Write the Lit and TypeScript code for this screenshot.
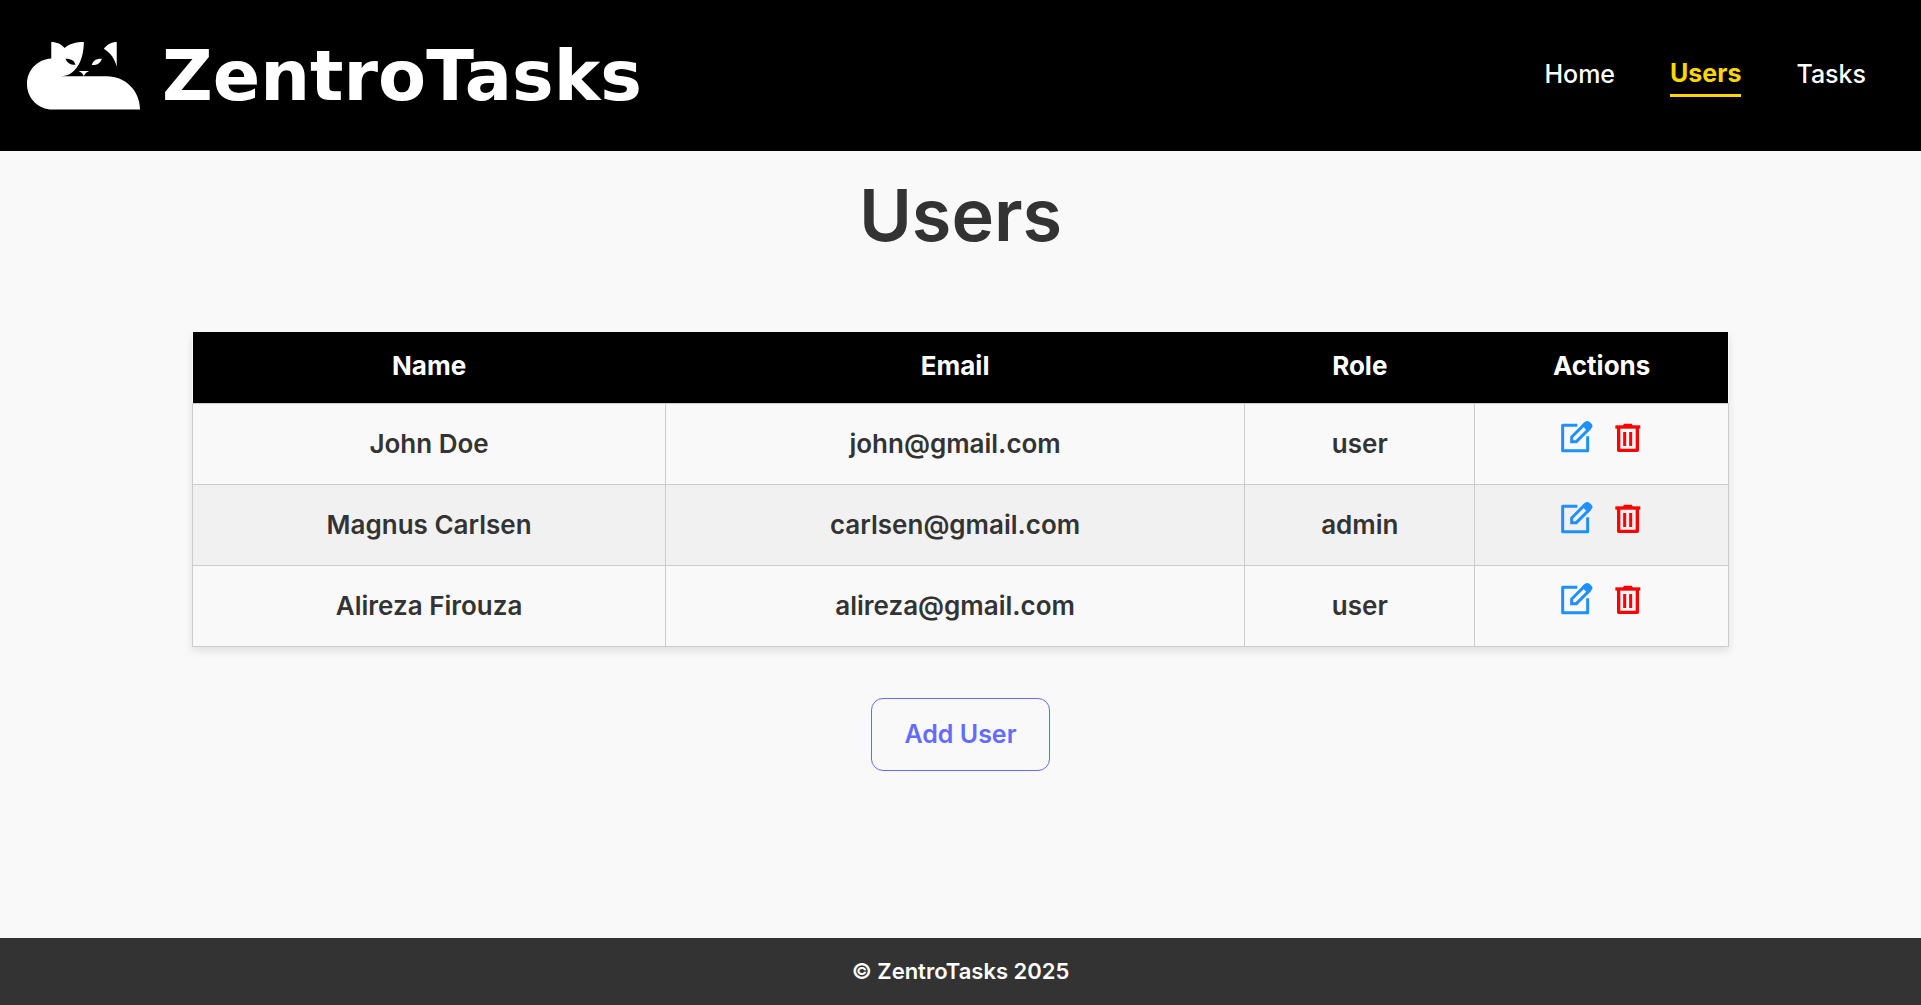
import { LitElement, html, css, svg } from "lit";
import { customElement } from "lit/decorators.js";

interface User {
  name: string;
  email: string;
  role: string;
}

const USERS: User[] = [
  { name: "John Doe", email: "john@gmail.com", role: "user" },
  { name: "Magnus Carlsen", email: "carlsen@gmail.com", role: "admin" },
  { name: "Alireza Firouza", email: "alireza@gmail.com", role: "user" },
];

const catLogo = html`
  <svg class="cat" viewBox="50 66 340 204" aria-hidden="true">
    ${svg`
    <path fill="#fff" fill-rule="evenodd" d="M123 66C140 66 154 73 163 84C177 72 197 66 221 66C221 122 196 169 152 169H290C346 169 390 213 390 269H127C84 269 50 235 50 192C50 150 82 117 123 115Z
      M166 116C171 130 182 135 196 134C192 120 181 116 166 116Z"/>
    <path fill="#fff" d="M245 135C248 121 260 115 275 116C272 129 260 136 245 135Z"/>
    <path fill="#fff" d="M205 153H237C229 156 224 161 221 169C218 161 213 156 205 153Z"/>
    <path fill="#fff" d="M281 86C291 74 304 66 320 66V140C314 116 302 99 281 86Z"/>`}
  </svg>
`;

const editIcon = html`
  <svg class="edit-icon" viewBox="30 30 99 99" aria-hidden="true">
    ${svg`
    <g fill="none" stroke="#1e90ff" stroke-linejoin="round">
      <path stroke-width="9" d="M82 46H38V122H113V79"/>
      <path stroke-width="9" stroke-linejoin="miter" d="M65 95V81L103 43L117 57L79 95Z"/>
    </g>
    <path fill="#1e90ff" d="M95 45L105 35Q112 30 119 36L125 42Q130 48 125 54L114 65Z"/>`}
  </svg>
`;

const trashIcon = html`
  <svg class="trash-icon" viewBox="189 30 90 99" aria-hidden="true">
    ${svg`
    <g fill="none" stroke="#f00">
      <path stroke-width="10" d="M196 51H271"/>
      <path stroke-width="10" stroke-linejoin="round" d="M206 54V121H262V54"/>
      <path stroke-width="9" d="M224 66V108M242 66V108"/>
    </g>
    <path fill="#f00" d="M218 48L222 41H245L249 48Z"/>`}
  </svg>
`;

@customElement("app-root")
export class AppRoot extends LitElement {
  static styles = css`
    :host {
      display: flex;
      flex-direction: column;
      min-height: 100vh;
      background: #f9f9f9;
      color: #333;
      font-family: Inter, "Open Sans", sans-serif;
      font-size: 26px;
      font-weight: 600;
      line-height: 40px;
    }
    .header {
      display: flex;
      align-items: center;
      justify-content: space-between;
      padding: 26px 55px 27px 27px;
      background: #000;
    }
    .brand {
      display: flex;
      align-items: center;
      gap: 22px;
      padding-top: 2px;
      color: #fff;
      font-family: "DejaVu Sans", sans-serif;
      font-size: 70px;
      font-weight: 700;
      line-height: 96px;
      text-decoration: none;
    }
    .cat {
      width: 113px;
      height: 68px;
    }
    .nav {
      display: flex;
      align-items: center;
      gap: 55px;
    }
    .nav-link {
      padding-bottom: 2px;
      color: #fff;
      font-size: 25px;
      font-weight: 500;
      line-height: 38px;
      text-decoration: none;
    }
    .nav-link.active {
      color: #ffd700;
      font-weight: 700;
      border-bottom: 3px solid #ffd700;
    }
    .main {
      flex: 1;
      display: flex;
      flex-direction: column;
      align-items: center;
    }
    .title {
      margin: 15px 0 69px;
      font-size: 72px;
      font-weight: 600;
      line-height: 97px;
    }
    .users {
      width: 80%;
      table-layout: fixed;
      border-collapse: collapse;
      text-align: center;
      box-shadow: 0 4px 8px rgba(0, 0, 0, 0.1);
    }
    .col-name {
      width: 30.8%;
    }
    .col-email {
      width: 37.7%;
    }
    .col-role {
      width: 15%;
    }
    .users th {
      padding: 14px 15px 17px;
      background: #000;
      color: #fff;
      font-weight: 700;
    }
    .users td {
      padding: 16px 15px 24px;
      border: 1px solid #ccc;
    }
    .users td.text {
      padding: 20px 15px;
    }
    .users tbody tr:nth-child(even) {
      background: #f1f1f1;
    }
    .actions {
      display: flex;
      justify-content: center;
      align-items: flex-start;
      gap: 20px;
      height: 40px;
    }
    .icon-button {
      display: flex;
      padding: 0;
      border: 0;
      background: none;
      cursor: pointer;
    }
    .edit-icon {
      width: 33px;
      height: 33px;
    }
    .trash-icon {
      width: 30px;
      height: 33px;
    }
    .add {
      margin: 51px 0;
      padding: 15px 32px 16px;
      border: 1px solid #646cff;
      border-radius: 12px;
      background: none;
      color: #646cff;
      font: inherit;
      font-size: 25px;
      cursor: pointer;
    }
    .footer {
      padding: 13px 20px 14px;
      background: #333;
      color: #fff;
      font-size: 22px;
      text-align: center;
    }
  `;

  private renderRow(user: User) {
    return html`
      <tr>
        <td class="text">${user.name}</td>
        <td class="text">${user.email}</td>
        <td class="text">${user.role}</td>
        <td>
          <div class="actions">
            <button class="icon-button" aria-label="Edit ${user.name}">${editIcon}</button>
            <button class="icon-button" aria-label="Delete ${user.name}">${trashIcon}</button>
          </div>
        </td>
      </tr>
    `;
  }

  render() {
    return html`
      <header class="header">
        <a class="brand" href="#home">${catLogo}<span>ZentroTasks</span></a>
        <nav class="nav">
          <a class="nav-link" href="#home">Home</a>
          <a class="nav-link active" href="#users" aria-current="page">Users</a>
          <a class="nav-link" href="#tasks">Tasks</a>
        </nav>
      </header>
      <main class="main">
        <h1 class="title">Users</h1>
        <table class="users">
          <colgroup>
            <col class="col-name" />
            <col class="col-email" />
            <col class="col-role" />
            <col />
          </colgroup>
          <thead>
            <tr>
              <th scope="col">Name</th>
              <th scope="col">Email</th>
              <th scope="col">Role</th>
              <th scope="col">Actions</th>
            </tr>
          </thead>
          <tbody>
            ${USERS.map((user) => this.renderRow(user))}
          </tbody>
        </table>
        <button class="add">Add User</button>
      </main>
      <footer class="footer">© ZentroTasks 2025</footer>
    `;
  }
}
